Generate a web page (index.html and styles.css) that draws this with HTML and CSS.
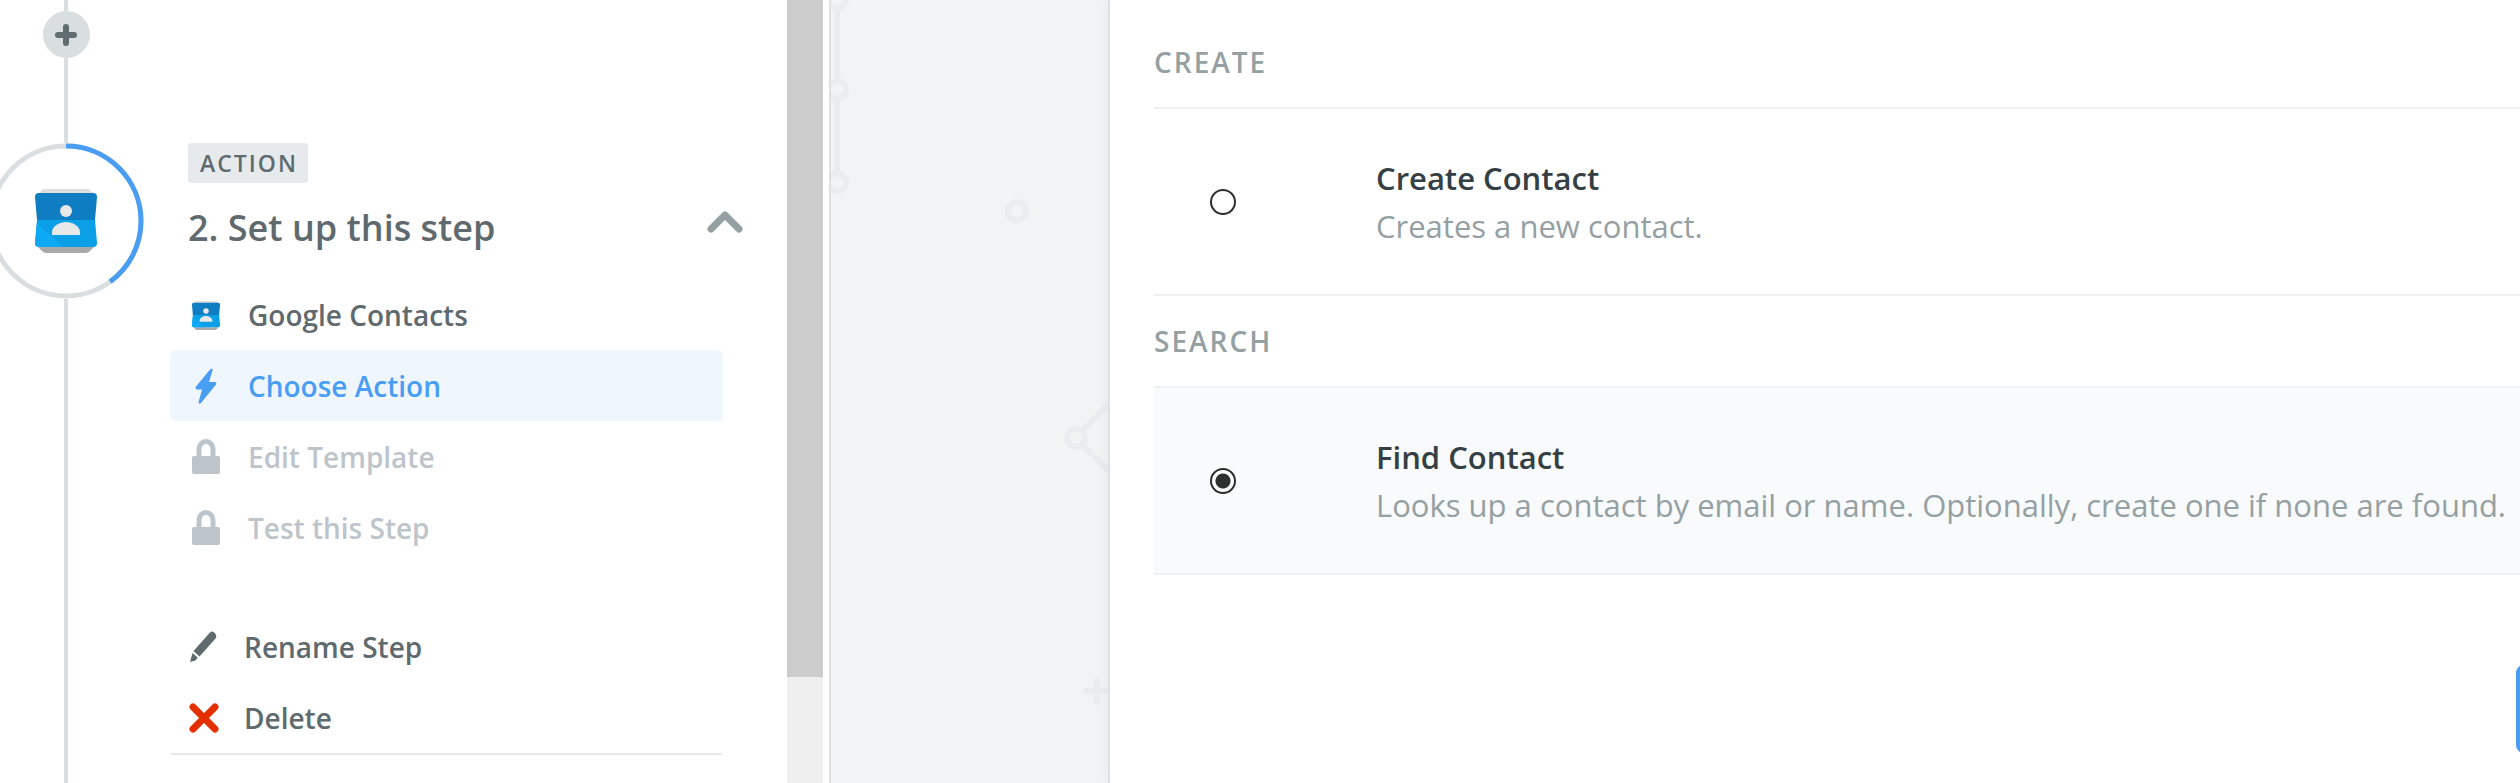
FILE: index.html
```html
<!DOCTYPE html>
<html lang="en">
<head>
    <meta charset="UTF-8">
    <title>Set up this step</title>
    <link rel="stylesheet" href="styles.css">
</head>
<body>
<svg class="sprite" aria-hidden="true">
    <symbol id="contacts" viewBox="0 0 62 64">
        <path fill="#dedede" d="M8 0h46l5 5H3z"/>
        <path fill="#a9a9a9" d="M3 58h56l-4 4q-2 2-4 2H11q-2 0-4-2z"/>
        <path fill="#0f7dc2" d="M4 4h54q4 0 4 4l-2 23H2L0 8q0-4 4-4z"/>
        <path fill="#0a9fe6" d="M2 31h58l2 23q0 4-4 4H4q-4 0-4-4z"/>
        <path fill="#0ea9f4" d="M2 34l26 24H4q-4 0-4-4z"/>
        <circle cx="31" cy="22" r="6" fill="#e8e8e8"/>
        <path fill="#e8e8e8" d="M17 46v-3c0-6 8-10 14-10s14 4 14 10v3z"/>
    </symbol>
    <symbol id="lock" viewBox="0 0 28 36">
        <path fill="none" stroke="currentColor" stroke-width="5" d="M7 18v-8a7 7.500 0 0 1 14 0v8"/>
        <rect y="17" width="28" height="18" rx="2" fill="currentColor"/>
    </symbol>
</svg>

<aside class="sidebar">
    <div class="rail">
        <span class="line line-top"></span>
        <button class="add" aria-label="Add a step">
            <svg width="22" height="22" viewBox="0 0 22 22"><path d="M11 3v16M3 11h16"/></svg>
        </button>
        <span class="line line-middle"></span>
        <div class="ring">
            <svg class="ring-progress" viewBox="0 0 156 156">
                <circle class="track" cx="78" cy="78" r="75"/>
                <circle class="value" cx="78" cy="78" r="75" pathLength="100" transform="rotate(-90 78 78)"/>
            </svg>
            <svg class="ring-logo"><use href="#contacts"/></svg>
        </div>
        <span class="line line-bottom"></span>
    </div>

    <section class="step">
        <span class="badge">ACTION</span>
        <header>
            <h1>2. Set up this step</h1>
            <button class="collapse" aria-label="Collapse">
                <svg width="36" height="22" viewBox="0 0 36 22"><path d="M4 18L18 4l14 14"/></svg>
            </button>
        </header>
        <nav>
            <a class="item" href="#app">
                <svg class="icon" viewBox="0 0 36 36"><use href="#contacts" x="3" y="4" width="30" height="29"/></svg>
                <span>Google Contacts</span>
            </a>
            <a class="item active" href="#action">
                <svg class="icon" viewBox="0 0 36 36"><path fill="currentColor" d="M22.500 1q2.500-1 2 1.500L21 14h6q2 .5 1 2.500L13 35q-2 1.700-2.500-.7L14 21.500H9q-2.200-.5-1-3z"/></svg>
                <span>Choose Action</span>
            </a>
            <a class="item locked" href="#template">
                <svg class="icon" viewBox="0 0 36 36"><use href="#lock" x="4" y="0" width="28" height="36"/></svg>
                <span>Edit Template</span>
            </a>
            <a class="item locked" href="#test">
                <svg class="icon" viewBox="0 0 36 36"><use href="#lock" x="4" y="0" width="28" height="36"/></svg>
                <span>Test this Step</span>
            </a>
        </nav>
        <div class="tools">
            <button class="item">
                <svg class="icon" viewBox="0 0 32 32"><path fill="currentColor" d="M22 1.500q2-2 4.500.3T28 7L11.500 25.500 5.500 20zM4.500 22L9.700 26.500 7.500 29.500 2 31z"/></svg>
                <span>Rename Step</span>
            </button>
            <button class="item">
                <svg class="icon" viewBox="0 0 32 32"><path stroke="#e42f00" stroke-width="7" stroke-linecap="round" d="M5 5l22 22M27 5L5 27"/></svg>
                <span>Delete</span>
            </button>
        </div>
    </section>

    <div class="scrollbar"><span class="thumb"></span></div>
</aside>

<main>
    <svg class="pattern" aria-hidden="true">
        <path d="M6 11v68M6 103v68M253 429l32-32M253 446l32 32M255 691h24M266 680v22"/>
        <circle cx="6" cy="-1" r="9"/>
        <circle cx="6" cy="90" r="9"/>
        <circle cx="6" cy="182" r="9"/>
        <circle cx="186" cy="211" r="9"/>
        <circle cx="245" cy="438" r="9"/>
    </svg>
    <form class="card" onsubmit="return false">
        <h2>CREATE</h2>
        <label class="choice">
            <input type="radio" name="action" value="create">
            <span class="text">
                <strong>Create Contact</strong>
                <span>Creates a new contact.</span>
            </span>
        </label>
        <h2>SEARCH</h2>
        <label class="choice">
            <input type="radio" name="action" value="find" checked>
            <span class="text">
                <strong>Find Contact</strong>
                <span>Looks up a contact by email or name. Optionally, create one if none are found.</span>
            </span>
        </label>
        <button class="submit" aria-label="Continue"></button>
    </form>
</main>
</body>
</html>
```

FILE: styles.css
```css
* {
    box-sizing: border-box;
}

body {
    display: flex;
    min-height: 100vh;
    margin: 0;
    background-color: #fff;
    color: #5f6a6e;
    font-family: "Open Sans", "Noto Sans", sans-serif;
    font-size: 28px;
}

button {
    padding: 0;
    border: none;
    background: none;
    color: inherit;
    font: inherit;
    cursor: pointer;
}

svg {
    display: block;
    flex: none;
    fill: none;
}

h1, h2 {
    margin: 0;
    font-weight: 600;
}

.sprite {
    position: absolute;
    width: 0;
    height: 0;
}

/* sidebar */

.sidebar {
    display: flex;
    flex: none;
    width: 831px;
    border-right: 2px solid #dfe1e3;
}

.rail {
    display: flex;
    flex: none;
    flex-direction: column;
    align-items: center;
    width: 170px;
    margin-left: -19px;
    margin-right: 19px;
}

.line {
    width: 4px;
    background-color: #d9dee0;
}

.line-top {
    height: 11px;
}

.line-middle {
    height: 85px;
}

.line-bottom {
    flex: 1;
}

.add {
    display: flex;
    align-items: center;
    justify-content: center;
    width: 47px;
    height: 47px;
    border-radius: 50%;
    background-color: #d9dee0;
}

.add path {
    stroke: #5f6d71;
    stroke-width: 6;
    stroke-linecap: round;
}

.ring {
    display: grid;
    place-items: center;
    width: 156px;
    height: 156px;
}

.ring > svg {
    grid-area: 1 / 1;
}

.ring-progress circle {
    stroke: #d9dee0;
    stroke-width: 5;
}

.ring-progress .value {
    stroke: #499df3;
    stroke-dasharray: 40 100;
}

.ring-logo {
    width: 62px;
    height: 64px;
}

.step {
    flex: 1;
    padding-top: 143px;
}

.badge {
    display: block;
    width: max-content;
    margin-left: 18px;
    padding: 0 10px 0 12px;
    border-radius: 4px;
    background-color: #e6eaed;
    font-size: 23px;
    font-weight: 600;
    line-height: 40px;
    letter-spacing: 2px;
}

.step header {
    display: flex;
    align-items: flex-start;
    justify-content: space-between;
    margin: 21px 44px 27px 18px;
}

.step h1 {
    font-size: 36px;
    line-height: 48px;
}

.collapse {
    padding-top: 7px;
}

.collapse path {
    stroke: #95a0a2;
    stroke-width: 7;
    stroke-linecap: round;
    stroke-linejoin: round;
}

.step nav,
.tools {
    display: grid;
    grid-auto-rows: 71px;
    margin-right: 64px;
}

.item {
    display: flex;
    align-items: center;
    gap: 24px;
    padding: 0 18px;
    border-radius: 6px;
    color: inherit;
    font-weight: 600;
    text-decoration: none;
}

.item span {
    overflow: hidden;
    line-height: 36px;
}

.item .icon {
    width: 36px;
    height: 36px;
}

.active {
    background-color: #eff6fe;
    color: #499df3;
}

.locked {
    color: #bdc5cb;
}

.tools {
    margin-top: 48px;
    border-bottom: 2px solid #e6e9eb;
    border-radius: 4px;
}

.tools .icon {
    width: 32px;
    height: 32px;
}

.scrollbar {
    width: 36px;
    margin-right: 6px;
    background-color: #efefef;
}

.thumb {
    display: block;
    height: 677px;
    background-color: #ccc;
}

/* editor */

main {
    display: flex;
    flex: 1;
    min-width: 0;
    overflow: hidden;
    background-color: #f0f4f5;
}

.pattern {
    width: 277px;
    stroke: #e9edf0;
    stroke-width: 6;
    stroke-linecap: round;
}

.card {
    display: flex;
    flex: 1 0 auto;
    flex-direction: column;
    margin-right: -240px;
    padding: 17px 44px 0;
    border-left: 2px solid #dde1e3;
    background-color: #fff;
    box-shadow: 0 0 14px rgba(0, 0, 0, .05);
}

.card h2 {
    border-bottom: 2px solid #eff1f2;
    color: #95a0a2;
    font-size: 28px;
    line-height: 90px;
    letter-spacing: 2px;
}

.choice {
    display: flex;
    align-items: center;
    gap: 140px;
    padding: 45px 56px 44px;
    border-bottom: 2px solid #eff1f2;
    font-size: 31px;
    line-height: 48px;
}

.choice:has(input:checked) {
    background-color: #f8fafc;
}

.choice input {
    flex: none;
    width: 26px;
    height: 26px;
    margin: 0;
    border: 2px solid #2d2e2e;
    border-radius: 50%;
    background-color: #fff;
    appearance: none;
}

.choice input:checked {
    background-image: radial-gradient(circle, #2d2e2e 7px, transparent 8px);
}

.text {
    display: grid;
    color: #95a0a2;
    white-space: nowrap;
}

.text strong {
    color: #354044;
    font-weight: 600;
}

.submit {
    align-self: flex-end;
    width: 200px;
    height: 88px;
    margin-top: 90px;
    border-radius: 8px;
    background-color: #499df3;
}
```
